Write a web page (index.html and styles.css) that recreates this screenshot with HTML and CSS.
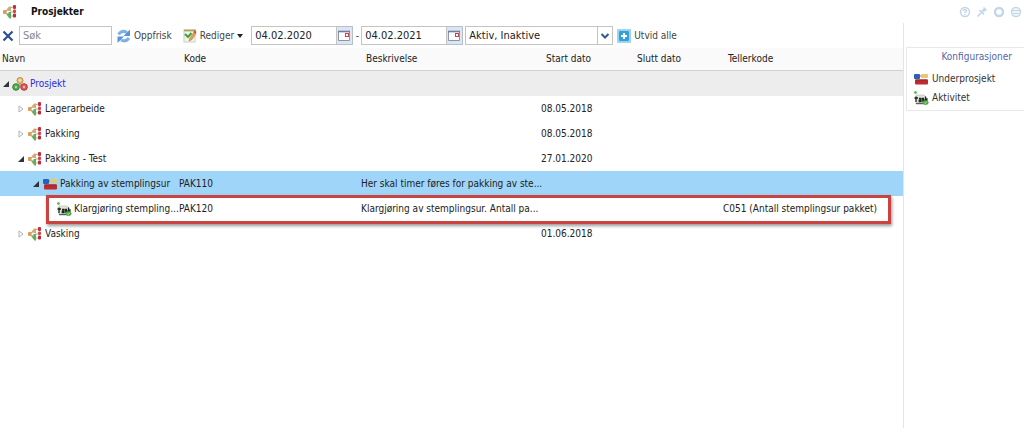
FILE: index.html
```html
<!DOCTYPE html>
<html lang="no">
<head>
<meta charset="utf-8">
<meta name="viewport" content="width=device-width, initial-scale=1">
<title>Prosjekter</title>
<link rel="stylesheet" href="styles.css">
</head>
<body>
<svg class="defs" aria-hidden="true">
  <symbol id="i-project" viewBox="0 0 16 16">
    <path d="M3 8 7.500 4M3 8.500l4.500 4M8 4l3-1M8 12h3M8 8h3" fill="none" stroke="#b8ae8c" stroke-width="1.200"/>
    <rect x="1" y="6" width="3.500" height="4" rx="1" fill="#dc9d58"/>
    <path d="M5 5 7 2.500h2V7H6.500z" fill="#d8a878"/>
    <path d="M5 9.500h1.500V8H9v6.500H7.500L5.500 12z" fill="#63ad5c"/>
    <rect x="11" y="1" width="3" height="4" rx="1" fill="#c0303a"/>
    <rect x="11" y="5.500" width="3" height="3.500" rx="1" fill="#cf4548"/>
    <rect x="11" y="9.500" width="3" height="4" rx="1" fill="#b52d35"/>
  </symbol>
  <symbol id="i-sub" viewBox="0 0 16 16">
    <rect x="1" y="3" width="6" height="5" rx="1" fill="#2c5fb8"/>
    <path d="M7 5h3" stroke="#777" stroke-width="1"/>
    <rect x="8" y="3" width="7" height="4" rx="1" fill="#e3ca70"/>
    <rect x="2" y="8.500" width="13" height="5" rx="1" fill="#c02a2c"/>
    <path d="M2.500 9h12" stroke="#8c2630" stroke-width="1"/>
  </symbol>
  <symbol id="i-task" viewBox="0 0 16 16">
    <path d="M3 5h8l3 3v6H3z" fill="#dfe6dc" stroke="#b4bcb2" stroke-width=".6"/>
    <path d="M2.500 1v3M1 2.500h3" stroke="#6cc15a" stroke-width="1.600"/>
    <path d="M1.500 8h3.500M3 6.500V12M6 8.500h2v3H6.300v-1.300H8M11 8.500H9.700V10H11v1.500H9.300M12.500 6.500V12M14.500 8.500 13 10l1.500 1.500" fill="none" stroke="#1c241c" stroke-width="1.300"/>
    <path d="M3 13.500h7" stroke="#54605a" stroke-width="1.200"/>
    <ellipse cx="12.500" cy="12.500" rx="3" ry="2.300" fill="#4ba83f"/>
    <path d="m11.300 12.500 1 1 1.600-2" fill="none" stroke="#d8f3d0" stroke-width=".8"/>
  </symbol>
  <symbol id="i-cal" viewBox="0 0 14 14">
    <path d="M1.500 2.500h11v9h-11z" fill="#fbfcfe" stroke="#8795ad"/>
    <path d="M1 2.500h12" stroke="#6d80a4" stroke-width="1.600"/>
    <rect x="8.500" y="4.500" width="3" height="3" fill="#fff" stroke="#c9434d"/>
  </symbol>
  <symbol id="i-open" viewBox="0 0 8 8"><path d="M7 1v6H1z" fill="#333"/></symbol>
  <symbol id="i-closed" viewBox="0 0 8 8"><path d="M2 1v6l4-3z" fill="#fff" stroke="#a8a8a8" stroke-width=".9"/></symbol>
</svg>

<header class="titlebar">
  <svg class="icon"><use href="#i-project"/></svg>
  <h1 class="title">Prosjekter</h1>
  <div class="tools">
    <button class="tool" aria-label="Hjelp"><svg viewBox="0 0 12 12"><circle cx="6" cy="6" r="4.500"/><path d="M4.500 5q0-1.500 1.500-1.500T7.500 5Q7.500 6 6 6.500V7M6 8v1"/></svg></button>
    <button class="tool" aria-label="Fest"><svg viewBox="0 0 12 12"><path d="M7.500 1.500l3 3M8.500 2.500 6 5M9.500 3.500 7 6M3.500 4l4.500 4.500M5.500 6.500 1.500 10.500"/></svg></button>
    <button class="tool" aria-label="Oppdater"><svg viewBox="0 0 12 12"><circle cx="6" cy="6" r="4" stroke-width="2.400"/></svg></button>
    <button class="tool" aria-label="Lukk"><svg viewBox="0 0 12 12"><circle cx="6" cy="6" r="4.500"/><path d="M2 4.500h8M3 7.500h6"/></svg></button>
  </div>
</header>

<div class="layout">
  <main class="main">
    <div class="toolbar">
      <button class="btn clear" aria-label="Tøm"><svg class="cross" viewBox="0 0 12 12"><path d="m1.500 1.500 9 9M10.500 1.500l-9 9" stroke="#2c4f91" stroke-width="2.200"/></svg></button>
      <input class="field search" type="text" placeholder="Søk" aria-label="Søk">
      <button class="btn refresh"><svg class="icon" viewBox="0 0 16 16"><path d="M2.500 6.500Q6 1.500 11 4.500" fill="none" stroke="#7fb2e4" stroke-width="3"/><path d="M14 1.500V8H7.500z" fill="#5a94d8"/><path d="M13 10Q9.500 14.500 5 12" fill="none" stroke="#7fb2e4" stroke-width="3"/><path d="M1.500 15V8.500H8z" fill="#5a94d8"/></svg>Oppfrisk</button>
      <button class="btn edit"><svg class="icon" viewBox="0 0 16 16"><rect x="2" y="2" width="11" height="12" fill="#f3f5ee" stroke="#c9cec4"/><path d="M2 2.500h12" stroke="#ada35e" stroke-width="1.800"/><path d="m3 6 3 3 3.500-4" fill="none" stroke="#45a23e" stroke-width="2.200"/><path d="m7 13 1-3 4-6 2 1.500-4 6z" fill="#e8a44a" stroke="#9a6a35" stroke-width=".5"/><path d="m11.500 4 1-1.500 2 1.500-1 1.500z" fill="#c94840"/></svg>Rediger<svg class="caret" viewBox="0 0 6 4"><path d="M0 0h6L3 4z" fill="#222"/></svg></button>
      <div class="combo date"><input class="field" type="text" value="04.02.2020" aria-label="Fra dato"><button class="trigger" aria-label="Velg fra dato"><svg class="cal"><use href="#i-cal"/></svg></button></div>
      <span class="dash">-</span>
      <div class="combo date"><input class="field" type="text" value="04.02.2021" aria-label="Til dato"><button class="trigger" aria-label="Velg til dato"><svg class="cal"><use href="#i-cal"/></svg></button></div>
      <div class="combo status"><select class="field" aria-label="Status"><option>Aktiv, Inaktive</option></select><span class="arrow"><svg viewBox="0 0 10 8"><path d="m1.500 2 3.500 3.500L8.500 2" fill="none" stroke="#34598f" stroke-width="2"/></svg></span></div>
      <button class="btn expand"><svg class="icon" viewBox="0 0 16 16"><rect x="1" y="1" width="14" height="14" rx="1" fill="#9ad6f2"/><rect x="3" y="3" width="10" height="10" rx="1" fill="#35a0d8"/><path d="M8 5v6M5 8h6" stroke="#fff" stroke-width="2"/></svg>Utvid alle</button>
    </div>

    <div class="grid">
      <table class="table">
        <colgroup><col class="c-name"><col class="c-code"><col class="c-desc"><col class="c-date"><col class="c-date"><col></colgroup>
        <thead><tr><th>Navn</th><th>Kode</th><th>Beskrivelse</th><th>Start dato</th><th>Slutt dato</th><th>Tellerkode</th></tr></thead>
        <tbody>
          <tr class="root"><td><div class="node l0"><svg class="twist"><use href="#i-open"/></svg><svg class="icon" viewBox="0 0 16 16"><path d="M8 5v4L4 11M8 9l4 2" stroke="#999" fill="none"/><circle cx="8" cy="4.500" r="3" fill="#e6c384" stroke="#c28b3e"/><circle cx="4" cy="11" r="3.300" fill="#58ab55" stroke="#37833a"/><circle cx="12" cy="11" r="3.300" fill="#e0605a" stroke="#b93432"/><path d="M3 11h2M11 11h2M8 3.500v2" stroke="#fff"/></svg><a class="link" href="#">Prosjekt</a></div></td><td></td><td></td><td></td><td></td><td></td></tr>
          <tr><td><div class="node l1"><svg class="twist"><use href="#i-closed"/></svg><svg class="icon"><use href="#i-project"/></svg><span class="label">Lagerarbeide</span></div></td><td></td><td></td><td>08.05.2018</td><td></td><td></td></tr>
          <tr><td><div class="node l1"><svg class="twist"><use href="#i-closed"/></svg><svg class="icon"><use href="#i-project"/></svg><span class="label">Pakking</span></div></td><td></td><td></td><td>08.05.2018</td><td></td><td></td></tr>
          <tr><td><div class="node l1"><svg class="twist"><use href="#i-open"/></svg><svg class="icon"><use href="#i-project"/></svg><span class="label">Pakking - Test</span></div></td><td></td><td></td><td>27.01.2020</td><td></td><td></td></tr>
          <tr class="selected"><td><div class="node l2"><svg class="twist"><use href="#i-open"/></svg><svg class="icon"><use href="#i-sub"/></svg><span class="label">Pakking av stemplingsur</span></div></td><td>PAK110</td><td>Her skal timer føres for pakking av ste...</td><td></td><td></td><td></td></tr>
          <tr><td><div class="node l3"><svg class="icon"><use href="#i-task"/></svg><span class="label">Klargjøring stempling...</span></div></td><td>PAK120</td><td>Klargjøring av stemplingsur. Antall pa...</td><td></td><td></td><td>C051 (Antall stemplingsur pakket)</td></tr>
          <tr><td><div class="node l1"><svg class="twist"><use href="#i-closed"/></svg><svg class="icon"><use href="#i-project"/></svg><span class="label">Vasking</span></div></td><td></td><td></td><td>01.06.2018</td><td></td><td></td></tr>
        </tbody>
      </table>
      <div class="highlight"></div>
    </div>
  </main>

  <aside class="side">
    <section class="panel">
      <h2 class="panel-title">Konfigurasjoner</h2>
      <button class="item"><svg class="icon"><use href="#i-sub"/></svg>Underprosjekt</button>
      <button class="item"><svg class="icon"><use href="#i-task"/></svg>Aktivitet</button>
    </section>
  </aside>
</div>
</body>
</html>
```
FILE: styles.css
```css
* { box-sizing: border-box; }
body {
  margin: 0;
  min-height: 100vh;
  display: flex;
  flex-direction: column;
  background: #fff;
  color: #222;
  font: 10px/14px "DejaVu Sans Condensed", Tahoma, "DejaVu Sans", sans-serif;
}
button, input, select { font: inherit; color: inherit; }
button { margin: 0; padding: 0; border: 0; background: none; }
.defs { position: absolute; width: 0; height: 0; }
.icon { width: 16px; height: 16px; flex: none; }

.titlebar { display: flex; align-items: center; height: 23px; padding: 0 2px; }
.title { margin: 0 0 0 13px; font-size: 10px; line-height: 14px; font-weight: bold; color: #111; }
.tools { display: flex; gap: 5px; margin-left: auto; }
.tool { width: 12px; height: 12px; }
.tool svg { display: block; width: 12px; height: 12px; fill: none; stroke: #c3d6e8; stroke-width: 1.5px; }

.layout { display: flex; flex: 1; }
.main { flex: 1; min-width: 0; border-right: 1px solid #e4e4e4; }

.toolbar { display: flex; align-items: center; height: 25px; padding-left: 2px; white-space: nowrap; color: #444; }
.btn { display: flex; align-items: center; gap: 2px; }
.cross { width: 12px; height: 12px; }
.field { height: 19px; border: 1px solid #c4c4c4; border-radius: 0; background: #fff; padding: 0 3px; color: #222; font-size: 11px; outline: none; }
.search { width: 93px; margin-left: 5px; }
.search::placeholder { color: #888; opacity: 1; }
.refresh { margin-left: 4px; }
.edit { margin-left: 10px; }
.caret { width: 6px; height: 4px; margin-left: 1px; }
.combo { display: flex; height: 19px; }
.combo .field { flex: 1; min-width: 0; }
.date { width: 102px; }
.edit + .date { margin-left: 8px; }
.trigger { width: 16px; border: 1px solid #b4bfd0; border-left: 0; background: #dfe5ee; }
.cal { display: block; width: 14px; height: 14px; }
.dash { width: 8px; text-align: center; }
.status { width: 148px; margin-left: 2px; }
.status .field { appearance: none; border-right: 0; }
.arrow { display: flex; align-items: center; justify-content: center; width: 16px; border: 1px solid #c4c4c4; }
.arrow svg { width: 10px; height: 8px; }
.expand { margin-left: 3px; }

.grid { position: relative; }
.table { width: 100%; table-layout: fixed; border-collapse: separate; border-spacing: 0; }
.c-name { width: 179px; }
.c-code { width: 182px; }
.c-desc { width: 180px; }
.c-date { width: 91px; }
th, td { padding: 0; text-align: left; font-weight: normal; white-space: nowrap; }
th { height: 23px; padding-left: 5px; background: #fafafa; border-bottom: 1px solid #d0d0d0; }
th:first-child { padding-left: 2px; }
td { height: 25px; }
.root td { background: #ededed; }
.selected td { background: #9fd5f8; }
.node { display: flex; align-items: center; }
.twist { width: 8px; height: 8px; margin-right: 2px; flex: none; }
.label, .link { margin-left: 2px; }
.link { color: #2a2ae0; text-decoration: none; }
.l0 { padding-left: 2px; }
.l1 { padding-left: 17px; }
.l2 { padding-left: 32px; }
.l3 { padding-left: 56px; }
.highlight { position: absolute; left: 46px; right: 12px; top: 147px; height: 29px; border: 3px solid #cb4340; box-shadow: 1px 2px 3px #00000066; pointer-events: none; }

.side { width: 120px; }
.panel { margin: 24px 0 0 2px; padding: 0 0 3px 6px; border: 1px solid #e8e8e8; border-right: 0; }
.panel-title { margin: 0 0 5px; padding: 2px 12px 0 0; font-size: 10px; line-height: 14px; font-weight: normal; text-align: right; color: #5566a8; }
.item { display: flex; align-items: center; gap: 3px; height: 19px; color: #333; }
```
